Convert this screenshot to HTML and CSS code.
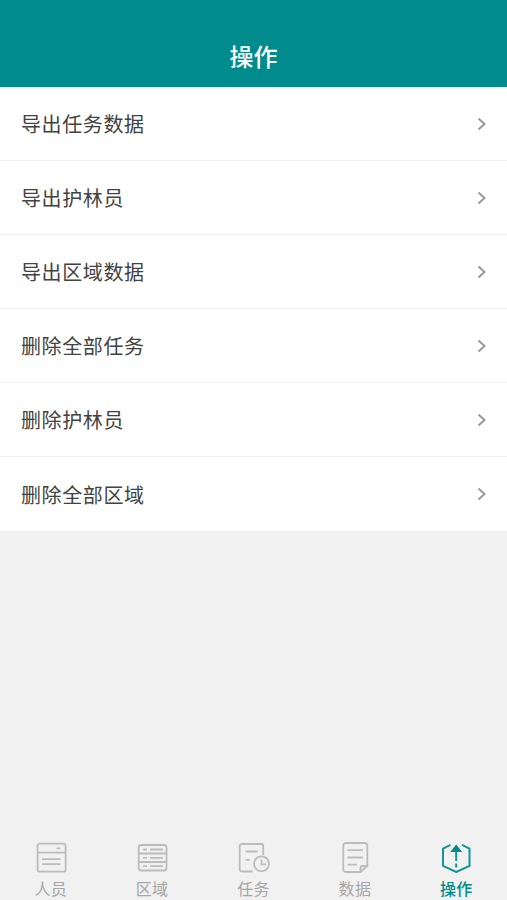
FILE: index.html
```html
<!DOCTYPE html>
<html lang="zh-CN">
<head>
<meta charset="utf-8">
<title>操作</title>
<link rel="stylesheet" href="styles.css">
</head>
<body>
<header class="header"><h1 class="title">操作</h1></header>
<main class="content">
  <ul class="list">
    <li class="row"><span>导出任务数据</span><svg class="chevron" viewBox="0 0 10 14"><path d="M1.500 1.500 7.500 7l-6 5.500"/></svg></li>
    <li class="row"><span>导出护林员</span><svg class="chevron" viewBox="0 0 10 14"><path d="M1.500 1.500 7.500 7l-6 5.500"/></svg></li>
    <li class="row"><span>导出区域数据</span><svg class="chevron" viewBox="0 0 10 14"><path d="M1.500 1.500 7.500 7l-6 5.500"/></svg></li>
    <li class="row"><span>删除全部任务</span><svg class="chevron" viewBox="0 0 10 14"><path d="M1.500 1.500 7.500 7l-6 5.500"/></svg></li>
    <li class="row"><span>删除护林员</span><svg class="chevron" viewBox="0 0 10 14"><path d="M1.500 1.500 7.500 7l-6 5.500"/></svg></li>
    <li class="row"><span>删除全部区域</span><svg class="chevron" viewBox="0 0 10 14"><path d="M1.500 1.500 7.500 7l-6 5.500"/></svg></li>
  </ul>
</main>
<nav class="tabs">
  <a class="tab">
    <svg class="icon" viewBox="0 0 32 32"><rect x="2.600" y="2.700" width="28" height="28" rx="2"/><path d="M2.600 11.700h28M7 18.200h18.500M7 23.200h18.500M21.500 7.300h4"/></svg>
    <span>人员</span>
  </a>
  <a class="tab">
    <svg class="icon" viewBox="0 0 32 32"><rect x="2.700" y="4" width="27.800" height="25.500" rx="2.500"/><path d="M3 12.500h27.500M3 21h27.500M7 8.500h4M14 8.500h13M7 16.800h4M14 16.800h13M7 25.200h4M14 25.200h13"/></svg>
    <span>区域</span>
  </a>
  <a class="tab">
    <svg class="icon" viewBox="0.800 0 32 32"><path d="M15.500 30.500H4.500a2 2 0 0 1-2-2V5a2 2 0 0 1 2-2h19.500a2 2 0 0 1 2 2v9M8.500 10.500h12M8.500 18.800h4"/><circle cx="24.300" cy="22.800" r="7.500"/><path d="M24.300 18.500v4.800h4.500"/></svg>
    <span>任务</span>
  </a>
  <a class="tab">
    <svg class="icon" viewBox="0 0 32 32"><path d="M21.500 31H6.800a2.500 2.500 0 0 1-2.500-2.500V4.500A2.500 2.500 0 0 1 6.800 2h19a2.500 2.500 0 0 1 2.500 2.500V25zM21.500 31v-4a2 2 0 0 1 2-2h4.800M8.500 9.200h15.500M8.500 16.500h15.500M8.500 23.700h9.500"/></svg>
    <span>数据</span>
  </a>
  <a class="tab tab-active">
    <svg class="icon" viewBox="0 0 32 32"><path d="M10.500 3.800 3 7.500v17.300l13.200 6.200 13.300-6.200V7.500L22 3.800M16.200 9v11M16.200 22.500v4"/><path class="solid" d="m16.200 3.500 6 7.500h-12z"/></svg>
    <span>操作</span>
  </a>
</nav>
</body>
</html>
```
FILE: styles.css
```css
* { box-sizing: border-box; }
body {
  margin: 0;
  height: 900px;
  display: flex;
  flex-direction: column;
  overflow: hidden;
  background: #f1f1f1;
  color: #424242;
  font-family: "Noto Sans CJK SC", sans-serif;
}
.header {
  height: 87px;
  padding-top: 26px;
  background: #008c8c;
  color: #fff;
  text-align: center;
}
.title {
  margin: 0;
  font-size: 24px;
  line-height: 60px;
  font-weight: 500;
}
.content { flex: 1; }
.list { margin: 0; padding: 0; list-style: none; background: #fff; }
.row {
  height: 74.1px;
  padding: 0 20px 0 21px;
  display: flex;
  align-items: center;
  justify-content: space-between;
  border-bottom: 1px solid #f1f1f1;
  font-size: 20px;
  letter-spacing: 0.6px;
}
.chevron {
  width: 10px;
  height: 14px;
  fill: none;
  stroke: #999;
  stroke-width: 2;
}
.tabs { height: 60px; display: flex; }
.tab {
  flex: 1;
  padding-top: 1px;
  display: flex;
  flex-direction: column;
  align-items: center;
  color: #a6a6a6;
  font-size: 16px;
  line-height: 24px;
  letter-spacing: 0.3px;
}
.icon {
  width: 32px;
  height: 32px;
  margin-bottom: 3px;
  fill: none;
  stroke: #bcbcbc;
  stroke-width: 1.8;
}
.tab-active { color: #008c8c; font-weight: 500; }
.tab-active .icon { stroke: #159595; stroke-width: 2; }
.solid { fill: #008c8c; stroke: none; }
```
